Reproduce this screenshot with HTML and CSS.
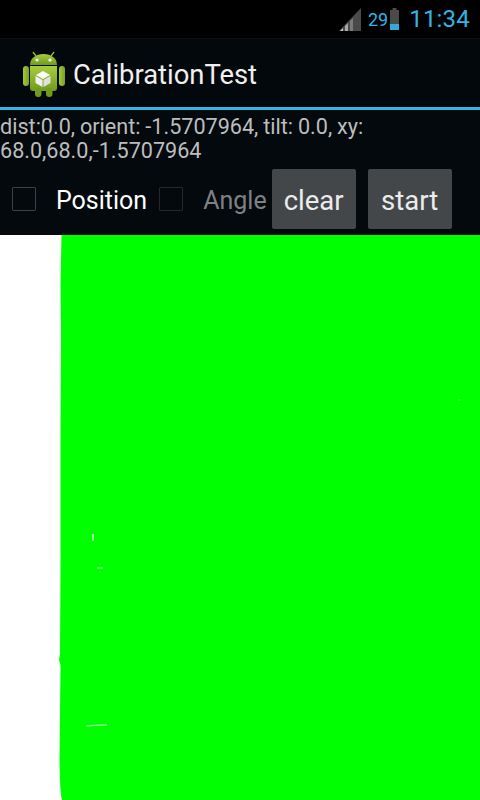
FILE: index.html

```html
<!DOCTYPE html>
<html lang="en">
<head>
    <meta charset="UTF-8">
    <meta name="viewport" content="width=device-width, initial-scale=1.0">
    <title>CalibrationTest</title>
    <link rel="stylesheet" href="styles.css">
</head>
<body>

    <div class="status-bar">
        <svg class="signal-icon" width="22" height="23" viewBox="0 0 22 23">
            <polygon points="22,0 22,23 0,23" fill="#4a4a4a"/>
            <polygon points="1,23 4,20 4,23" fill="#c4c4c4"/>
            <polygon points="6,23 6,18 9,15 9,23" fill="#a8a8a8"/>
            <polygon points="11,23 11,13 14,10 14,23" fill="#7c7c7c"/>
        </svg>
        <span class="battery-text">29</span>
        <svg class="battery-icon" width="9" height="22" viewBox="0 0 9 22">
            <rect x="2.5" y="0" width="4" height="2" fill="#4a4a4a"/>
            <rect x="0" y="2" width="9" height="14" fill="#4a4a4a"/>
            <rect x="0" y="16" width="9" height="6" fill="#33a9d6"/>
        </svg>
        <span class="clock">11:34</span>
    </div>

    <div class="action-bar">
        <svg class="app-icon" width="42" height="48" viewBox="0 0 42 48">
            <defs>
                <linearGradient id="droid" x1="0" y1="0" x2="0" y2="1">
                    <stop offset="0" stop-color="#a8cc3c"/>
                    <stop offset="1" stop-color="#6f9a1e"/>
                </linearGradient>
                <linearGradient id="limb" x1="0" y1="0" x2="1" y2="0">
                    <stop offset="0" stop-color="#a5c93a"/>
                    <stop offset="1" stop-color="#76a021"/>
                </linearGradient>
            </defs>
            <path d="M13 6 L10 2 M28 6 L31 2" stroke="#9bbf2e" stroke-width="1.3" fill="none"/>
            <path d="M7 15 C7 8 13 4 20.500 4 C28 4 34 8 34 15 Z" fill="url(#droid)"/>
            <circle cx="14" cy="10" r="1.6" fill="#f4f4f4"/>
            <circle cx="27" cy="10" r="1.6" fill="#f4f4f4"/>
            <rect x="0" y="16" width="6" height="20" rx="3" fill="url(#limb)"/>
            <rect x="36" y="16" width="6" height="20" rx="3" fill="url(#limb)"/>
            <path d="M7 16 H34 V38 Q34 41 31 41 H10 Q7 41 7 38 Z" fill="url(#droid)"/>
            <rect x="12" y="38" width="6.500" height="9" rx="3.200" fill="#6f9a1e"/>
            <rect x="23" y="38" width="6.500" height="9" rx="3.200" fill="#6f9a1e"/>
            <polygon points="20,21 27,25 20,29 13,25" fill="#fff"/>
            <polygon points="12.500,26 19.500,30 19.500,37 12.500,33" fill="#f1f1f1"/>
            <polygon points="27.500,26 20.500,30 20.500,37 27.500,33" fill="#e0e0e0"/>
        </svg>
        <span class="app-title">CalibrationTest</span>
    </div>

    <div class="panel">
        <div class="readout">dist:0.0, orient: -1.5707964, tilt: 0.0, xy:<br>68.0,68.0,-1.5707964</div>
        <div class="controls">
            <span class="checkbox first"></span>
            <span class="check-label">Position</span>
            <span class="checkbox second"></span>
            <span class="check-label disabled">Angle</span>
            <button class="btn clear-btn">clear</button>
            <button class="btn">start</button>
        </div>
    </div>

    <svg class="canvas" width="480" height="565" viewBox="0 0 480 565">
        <path class="paint" d="M61.500 0 L480 0 L480 565 L62 565 Q60 560 59.500 525 L60.500 430 L59 425 L60 418 L60.500 330 L60.500 200 L61 100 L60.500 50 Z"/>
        <g class="gaps">
            <path d="M93 299 V306" stroke-width="1.500"/>
            <path d="M97 333 H103" stroke-width="1"/>
            <path d="M86 491 Q96 490 107 490" stroke-width="1"/>
            <path d="M392.500 621 V640" stroke-width="1.500"/>
            <path d="M419.500 619 V646" stroke-width="1"/>
            <path d="M458 165 H460" stroke-width="1"/>
        </g>
    </svg>

</body>
</html>
```

FILE: styles.css

```css
html, body {
    margin: 0;
    padding: 0;
}

body {
    width: 480px;
    height: 800px;
    overflow: hidden;
    background-color: #fff;
    font-family: 'Roboto', sans-serif;
    display: flex;
    flex-direction: column;
}

.status-bar {
    height: 38px;
    background-color: #000;
    display: flex;
    align-items: center;
    justify-content: flex-end;
    padding-right: 10px;
    color: #33b5e5;
    flex-shrink: 0;
    border-bottom: 1px solid #0a1116;
}

.signal-icon {
    margin-right: 7px;
}

.battery-text {
    font-size: 18px;
    margin-right: 2px;
}

.battery-icon {
    margin-right: 10px;
    margin-bottom: 1px;
}

.clock {
    font-size: 24px;
    letter-spacing: 0.2px;
}

.action-bar {
    height: 68px;
    background-color: #03080c;
    border-bottom: 3px solid #33b5e5;
    display: flex;
    align-items: center;
    padding-left: 23px;
    flex-shrink: 0;
}

.app-icon {
    margin-right: 8px;
    margin-top: 1px;
}

.app-title {
    color: #f0f0f0;
    font-size: 27.4px;
    padding-top: 3px;
}

.panel {
    height: 125px;
    background-color: #03090d;
    flex-shrink: 0;
    display: flex;
    flex-direction: column;
}

.readout {
    color: #bdbdbd;
    font-size: 21.6px;
    word-spacing: -0.5px;
    line-height: 24px;
    padding-top: 5px;
    height: 48px;
}

.controls {
    display: flex;
    align-items: center;
    height: 60px;
    margin-top: 6px;
}

.checkbox {
    width: 22px;
    height: 22px;
    border: 1px solid #3c4144;
    border-radius: 1px;
}

.checkbox.first {
    margin-left: 12px;
    margin-right: 20px;
}

.checkbox.second {
    margin-left: 12px;
    margin-right: 20px;
    border-color: #26292b;
}

.check-label {
    color: #fff;
    font-size: 25px;
    padding-top: 2px;
}

.check-label.disabled {
    color: #7d8184;
}

.btn {
    width: 84px;
    height: 60px;
    margin-left: 12px;
    padding: 2px 0 0;
    background-color: #43474a;
    color: #ececec;
    border: none;
    border-radius: 2px;
    font-family: 'Roboto', sans-serif;
    font-size: 27.5px;
}

.clear-btn {
    margin-left: 5px;
}

.canvas {
    display: block;
    flex-shrink: 0;
}

.paint {
    fill: #00ff00;
}

.gaps path {
    stroke: #c4ffc4;
    fill: none;
}
```
